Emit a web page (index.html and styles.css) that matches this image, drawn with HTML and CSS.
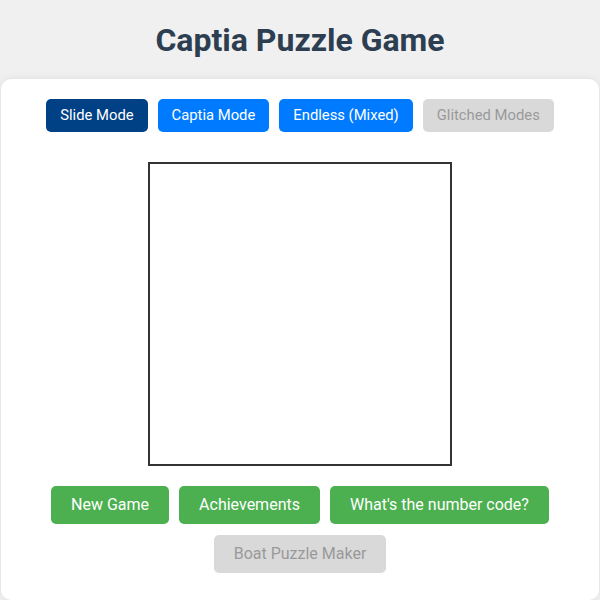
FILE: index.html
```html
<!DOCTYPE html>
<html lang="en">
<head>
<meta charset="utf-8">
<title>Captia Puzzle Game</title>
<link rel="stylesheet" href="styles.css">
</head>
<body>
  <h1 class="title">Captia Puzzle Game</h1>
  <main class="card">
    <div class="modes">
      <button class="btn mode active">Slide Mode</button>
      <button class="btn mode">Captia Mode</button>
      <button class="btn mode">Endless (Mixed)</button>
      <button class="btn mode disabled">Glitched Modes</button>
    </div>
    <div class="board"></div>
    <div class="actions">
      <button class="btn action">New Game</button>
      <button class="btn action">Achievements</button>
      <button class="btn action">What's the number code?</button>
    </div>
    <div class="actions">
      <button class="btn action disabled">Boat Puzzle Maker</button>
    </div>
  </main>
</body>
</html>
```
FILE: styles.css
```css
* { box-sizing: border-box; }
html, body { margin: 0; padding: 0; }
body {
  background: #f0f0f0;
  font-family: Roboto, "Noto Sans", "Liberation Sans", sans-serif;
  padding: 0 1px;
}
.title {
  margin: 0;
  padding-top: 21px;
  height: 79px;
  text-align: center;
  font-size: 32px;
  font-weight: 700;
  line-height: 38px;
  color: #2c3e50;
}
.card {
  background: #fff;
  border-radius: 10px;
  box-shadow: 0 0 8px rgba(0,0,0,0.08);
  padding: 20px 0 27px;
  display: flex;
  flex-direction: column;
  align-items: center;
}
.modes {
  display: flex;
  gap: 10px;
  justify-content: center;
}
.btn {
  border: none;
  font-family: inherit;
  color: #fff;
  cursor: pointer;
}
.mode {
  font-size: 14.8px;
  line-height: 18px;
  padding: 7px 14px 8px;
  border-radius: 5px;
  background: #007bff;
  height: 33px;
}
.mode.active { background: #004085; }
.btn.disabled { background: #d9d9d9; color: #999; }
.board {
  width: 304px;
  height: 304px;
  border: 2px solid #333;
  margin: 30px 0 20px;
}
.actions {
  display: flex;
  gap: 10px;
  justify-content: center;
}
.actions + .actions { margin-top: 11px; }
.action {
  font-size: 16px;
  line-height: 18px;
  padding: 10px 20px;
  height: 38px;
  border-radius: 5px;
  background: #4caf50;
}
```
